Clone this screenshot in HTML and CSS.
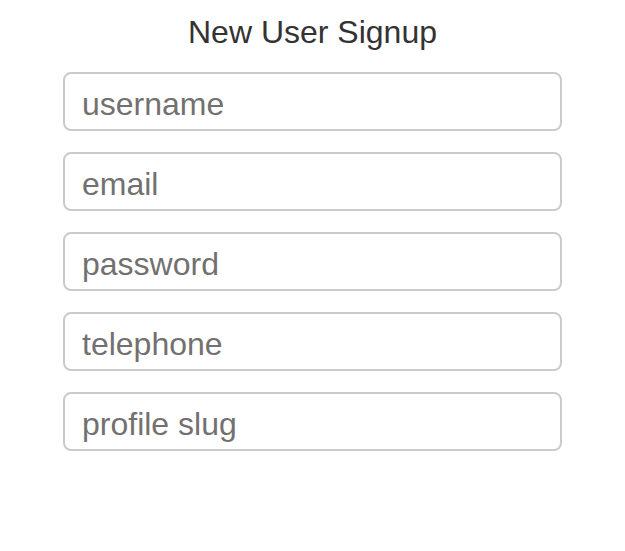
FILE: index.html
```html
<!DOCTYPE html>
<html>
<head>
<meta charset="utf-8">
<link rel="stylesheet" href="styles.css">
</head>
<body>
<div class="signup">
  <h1 class="title">New User Signup</h1>
  <form class="form">
    <input class="field" type="text" placeholder="username">
    <input class="field" type="email" placeholder="email">
    <input class="field" type="password" placeholder="password">
    <input class="field" type="tel" placeholder="telephone">
    <input class="field" type="text" placeholder="profile slug">
  </form>
</div>
</body>
</html>
```
FILE: styles.css
```css
html, body {
  margin: 0;
  padding: 0;
  background: #fff;
}
body {
  font-family: "Liberation Sans", Arial, sans-serif;
  color: #333;
}
.signup {
  width: 499px;
  margin: 0 auto;
  padding-top: 12px;
  display: flex;
  flex-direction: column;
  align-items: center;
}
.title {
  margin: 0;
  font-size: 32px;
  font-weight: normal;
  line-height: 40px;
  color: #333;
}
.form {
  margin-top: 20px;
  width: 100%;
  display: flex;
  flex-direction: column;
  gap: 21px;
}
.field {
  box-sizing: border-box;
  width: 100%;
  height: 59px;
  border: 2px solid #cbcbcb;
  border-radius: 8px;
  padding: 6px 17px 0;
  font-family: "Liberation Sans", Arial, sans-serif;
  font-size: 32px;
  color: #333;
  outline: none;
  background: #fff;
}
.field::placeholder {
  color: #737070;
  opacity: 1;
}
```
